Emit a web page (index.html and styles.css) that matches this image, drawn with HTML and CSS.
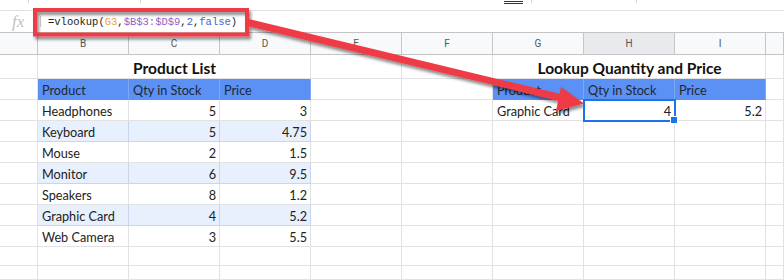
FILE: index.html
```html
<!DOCTYPE html>
<html lang="en">
<head>
    <meta charset="UTF-8">
    <title>VLOOKUP Example</title>
    <link rel="stylesheet" href="styles.css">
</head>
<body>
    <div class="toolbar">
        <span class="tick tick-1"></span>
        <span class="tick tick-2"></span>
        <span class="underline-icon"></span>
        <span class="tick tick-3"></span>
        <span class="tick tick-4"></span>
    </div>

    <div class="formula-bar">
        <div class="fx">fx</div>
        <div class="fx-divider"></div>
        <div class="formula">=vlookup(<span class="f-ref">G3</span>,<span class="f-range">$B$3:$D$9</span>,<span class="f-num">2</span>,<span class="f-bool">false</span>)</div>
    </div>

    <div id="sheet" class="sheet"></div>

    <!-- annotation drawn over the sheet -->
    <svg class="annotation" width="784" height="280" viewBox="0 0 784 280">
        <defs>
            <filter id="shadow" x="-10%" y="-10%" width="130%" height="140%">
                <feDropShadow dx="2" dy="3" stdDeviation="1.8" flood-color="#000" flood-opacity="0.45"/>
            </filter>
        </defs>
        <g filter="url(#shadow)">
            <rect x="35" y="10" width="212" height="24.5" fill="none" stroke="#ee3b44" stroke-width="4"/>
            <line x1="248" y1="22.5" x2="566" y2="99" stroke="#ee3b44" stroke-width="7"/>
            <polygon points="584,103.5 561,87 556,111" fill="#ee3b44"/>
        </g>
    </svg>

    <script>
        const cols = ['', 'B', 'C', 'D', 'E', 'F', 'G', 'H', 'I', ''];

        const products = [
            ['Headphones', 5, 3],
            ['Keyboard', 5, 4.75],
            ['Mouse', 2, 1.5],
            ['Monitor', 6, 9.5],
            ['Speakers', 8, 1.2],
            ['Graphic Card', 4, 5.2],
            ['Web Camera', 3, 5.5]
        ];

        const sheet = document.getElementById('sheet');
        let html = '';

        // column header row
        cols.forEach(c => {
            html += `<div class="colhead${c === 'H' ? ' active' : ''}">${c}</div>`;
        });

        // titles
        html += '<div class="cell"></div>';
        html += '<div class="cell title span3">Product List</div>';
        html += '<div class="cell"></div><div class="cell"></div>';
        html += '<div class="cell title span3">Lookup Quantity and Price</div>';
        html += '<div class="cell"></div>';

        // headers
        const heads = '<div class="cell head">Product</div><div class="cell head">Qty in Stock</div><div class="cell head">Price</div>';
        html += '<div class="cell"></div>' + heads + '<div class="cell"></div><div class="cell"></div>' + heads + '<div class="cell"></div>';

        // data rows (7 products + 2 empty rows)
        for (let r = 0; r < 9; r++) {
            const p = products[r];
            const alt = r % 2 === 1 ? ' alt' : '';
            html += '<div class="cell"></div>';
            if (p) {
                html += `<div class="cell${alt}">${p[0]}</div>`;
                html += `<div class="cell num${alt}">${p[1]}</div>`;
                html += `<div class="cell num${alt}">${p[2]}</div>`;
            } else {
                html += '<div class="cell"></div><div class="cell"></div><div class="cell"></div>';
            }
            html += '<div class="cell"></div><div class="cell"></div>';
            if (r === 0) {
                html += '<div class="cell">Graphic Card</div>';
                html += '<div class="cell num selected">4</div>';
                html += '<div class="cell num">5.2</div>';
            } else {
                html += '<div class="cell"></div><div class="cell"></div><div class="cell"></div>';
            }
            html += '<div class="cell"></div>';
        }

        sheet.innerHTML = html;
    </script>
</body>
</html>
```

FILE: styles.css
```css
* {
    box-sizing: border-box;
}
body {
    margin: 0;
    width: 784px;
    height: 280px;
    overflow: hidden;
    background: #fff;
    font-family: 'Lato', 'Open Sans', sans-serif;
    color: #222;
}
.toolbar {
    height: 11px;
    border-bottom: 1px solid #e0e0e0;
    display: flex;
    align-items: flex-start;
}
.tick {
    width: 1px;
    height: 3px;
    background: #d8d8d8;
}
.tick-1 { margin-left: 28px; }
.tick-2 { margin-left: 111px; }
.underline-icon {
    margin-left: 363px;
    margin-top: 1px;
    width: 19px;
    height: 3px;
    border-top: 1px solid #333;
    border-bottom: 1px solid #333;
}
.tick-3 { margin-left: 8px; }
.tick-4 { margin-left: 104px; }

.formula-bar {
    height: 22px;
    border-bottom: 1px solid #c4c4c4;
    display: flex;
    align-items: center;
}
.fx {
    width: 40px;
    padding-left: 12px;
    font-family: 'Liberation Serif', serif;
    font-style: italic;
    font-size: 17px;
    color: #c2c2c2;
    line-height: 20px;
}
.fx-divider {
    width: 1px;
    height: 11px;
    background: #d0d0d0;
}
.formula {
    margin-left: 7px;
    font-family: 'Liberation Mono', monospace;
    font-size: 10.5px;
    color: #222;
    padding-top: 1px;
}
.f-ref { color: #f39c3c; }
.f-range { color: #8e5fc7; }
.f-num { color: #3b5fc0; }
.f-bool { color: #4466cc; }

.sheet {
    display: grid;
    height: 247px;
    grid-template-columns: 38px repeat(8, 91px) 1fr;
    grid-template-rows: 22px 24px repeat(8, 21px) 19px 1fr;
}
.colhead {
    background: #f8f9fa;
    border-right: 1px solid #c7c7c7;
    border-bottom: 1px solid #c4c4c4;
    font-family: 'Roboto', 'Liberation Sans', sans-serif;
    font-size: 10px;
    color: #555;
    display: flex;
    align-items: center;
    justify-content: center;
}
.colhead.active {
    background: #e8eaed;
}
.cell {
    border-right: 1px solid #e2e2e2;
    border-bottom: 1px solid #e2e2e2;
    padding: 2px 3px 0 4px;
    font-size: 12.7px;
    line-height: 19px;
    white-space: nowrap;
    position: relative;
}
.num {
    text-align: right;
}
.title {
    grid-column: span 3;
    text-align: center;
    font-weight: bold;
    font-size: 15.5px;
    line-height: 22px;
    color: #111;
}
.head {
    background: #5b90f5;
    border-right-color: #7ea6f2;
    border-bottom-color: #5b90f5;
    color: #1f2733;
    line-height: 18px;
}
.alt {
    background: #e8f0fd;
    border-right-color: #c9d5eb;
    border-bottom-color: #c9d5eb;
}
.selected {
    outline: 2px solid #1a73e8;
    outline-offset: -1px;
    z-index: 1;
}
.selected::after {
    content: '';
    position: absolute;
    right: -4px;
    bottom: -4px;
    width: 6px;
    height: 6px;
    background: #1a73e8;
    border: 1px solid #fff;
}
.annotation {
    position: absolute;
    left: 0;
    top: 0;
    pointer-events: none;
}
```
